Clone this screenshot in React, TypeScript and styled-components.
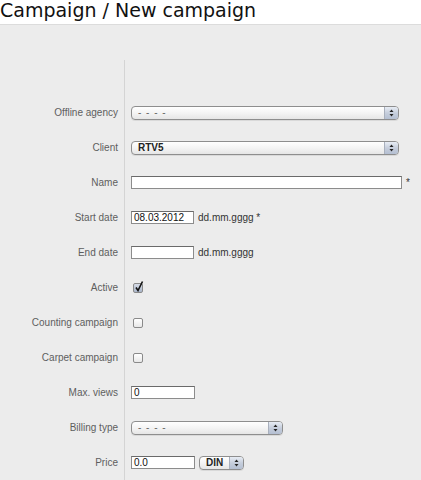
import styled, { createGlobalStyle } from 'styled-components';

const GlobalStyle = createGlobalStyle`
  html, body {
    margin: 0;
    padding: 0;
    background: #ececec;
    overflow: hidden;
  }
  body {
    font-family: 'Liberation Sans', Arial, sans-serif;
  }
`;

const Page = styled.div`
  width: 421px;
  height: 480px;
  background: #ececec;
`;

const Header = styled.h1`
  margin: 0;
  height: 24px;
  background: #fff;
  border-bottom: 1px solid #dcdcdc;
  font-family: 'DejaVu Sans', Verdana, sans-serif;
  font-weight: normal;
  font-size: 19px;
  line-height: 21px;
  color: #111;
`;

const Form = styled.div`
  margin-top: 35px;
  display: grid;
  grid-template-columns: 124px 1fr;
  grid-auto-rows: 35px;
`;

const Spacer = styled.div<{ $line?: boolean }>`
  border-left: ${(p) => (p.$line ? '1px solid #d4d4d4' : 'none')};
`;

const Label = styled.div`
  display: flex;
  align-items: center;
  justify-content: flex-end;
  padding-right: 6px;
  font-size: 10px;
  color: #5e5e5e;
  white-space: nowrap;
`;

const Field = styled.div`
  display: flex;
  align-items: center;
  gap: 4px;
  padding-left: 6px;
  border-left: 1px solid #d4d4d4;
  font-size: 10px;
  color: #333;
`;

const TextInput = styled.div<{ $w: number }>`
  box-sizing: border-box;
  width: ${(p) => p.$w}px;
  height: 13px;
  background: #fff;
  border: 1px solid #8c8c8c;
  border-top-color: #6a6a6a;
  font-size: 10px;
  line-height: 11px;
  padding-left: 2px;
  color: #111;
`;

const Select = styled.div<{ $w: number }>`
  box-sizing: border-box;
  width: ${(p) => p.$w}px;
  height: 14px;
  display: flex;
  align-items: stretch;
  border: 1px solid #8e8e8e;
  border-radius: 4px;
  background: linear-gradient(#ffffff, #f4f4f4 50%, #e6e6e6);
  box-shadow: 0 1px 0 rgba(0, 0, 0, 0.08);
  overflow: hidden;
`;

const SelectText = styled.span<{ $strong?: boolean }>`
  flex: 1;
  padding-left: 6px;
  font-size: 10px;
  line-height: 12px;
  font-weight: ${(p) => (p.$strong ? 'bold' : 'normal')};
  color: ${(p) => (p.$strong ? '#222' : '#666')};
  letter-spacing: ${(p) => (p.$strong ? '0' : '1px')};
`;

const Stepper = styled.span`
  width: 13px;
  display: flex;
  align-items: center;
  justify-content: center;
  border-left: 1px solid #a9b0bd;
  background: linear-gradient(#e8edf5, #c6cedc 50%, #b4bfd2);
`;

const Check = styled.span<{ $on?: boolean }>`
  box-sizing: border-box;
  width: 10px;
  height: 10px;
  margin-left: 2px;
  border: 1px solid #8a8a8a;
  border-radius: 2px;
  background: ${(p) =>
    p.$on ? 'linear-gradient(#d5dbe6, #a9b5c9)' : 'linear-gradient(#ffffff, #e8e8e8)'};
  position: relative;
`;

const Tick = styled.svg`
  position: absolute;
  left: 0;
  top: -3px;
`;

const Hint = styled.span`
  color: #333;
  font-size: 10px;
`;

const Arrows = () => (
  <svg width="5" height="8" viewBox="0 0 5 8">
    <path d="M2.5 0.5 L4.5 3 L0.5 3 Z" fill="#222" />
    <path d="M0.5 5 L4.5 5 L2.5 7.5 Z" fill="#222" />
  </svg>
);

const Dropdown = ({ w, value, strong }: { w: number; value: string; strong?: boolean }) => (
  <Select $w={w}>
    <SelectText $strong={strong}>{value}</SelectText>
    <Stepper>
      <Arrows />
    </Stepper>
  </Select>
);

const Checkbox = ({ checked }: { checked?: boolean }) => (
  <Check $on={checked}>
    {checked && (
      <Tick width="10" height="11" viewBox="0 0 10 11">
        <path d="M2 6.5 L4 9.5 L8.5 0.5" stroke="#111" strokeWidth="1.6" fill="none" />
      </Tick>
    )}
  </Check>
);

export default function App() {
  return (
    <Page>
      <GlobalStyle />
      <Header>Campaign / New campaign</Header>
      <Form>
        <Spacer />
        <Spacer $line />

        <Label>Offline agency</Label>
        <Field>
          <Dropdown w={268} value="- - - -" />
        </Field>

        <Label>Client</Label>
        <Field>
          <Dropdown w={268} value="RTV5" strong />
        </Field>

        <Label>Name</Label>
        <Field>
          <TextInput $w={271} />
          <Hint>*</Hint>
        </Field>

        <Label>Start date</Label>
        <Field>
          <TextInput $w={63}>08.03.2012</TextInput>
          <Hint>dd.mm.gggg *</Hint>
        </Field>

        <Label>End date</Label>
        <Field>
          <TextInput $w={63} />
          <Hint>dd.mm.gggg</Hint>
        </Field>

        <Label>Active</Label>
        <Field>
          <Checkbox checked />
        </Field>

        <Label>Counting campaign</Label>
        <Field>
          <Checkbox />
        </Field>

        <Label>Carpet campaign</Label>
        <Field>
          <Checkbox />
        </Field>

        <Label>Max. views</Label>
        <Field>
          <TextInput $w={64}>0</TextInput>
        </Field>

        <Label>Billing type</Label>
        <Field>
          <Dropdown w={152} value="- - - -" />
        </Field>

        <Label>Price</Label>
        <Field>
          <TextInput $w={64}>0.0</TextInput>
          <Dropdown w={45} value="DIN" strong />
        </Field>
      </Form>
    </Page>
  );
}
